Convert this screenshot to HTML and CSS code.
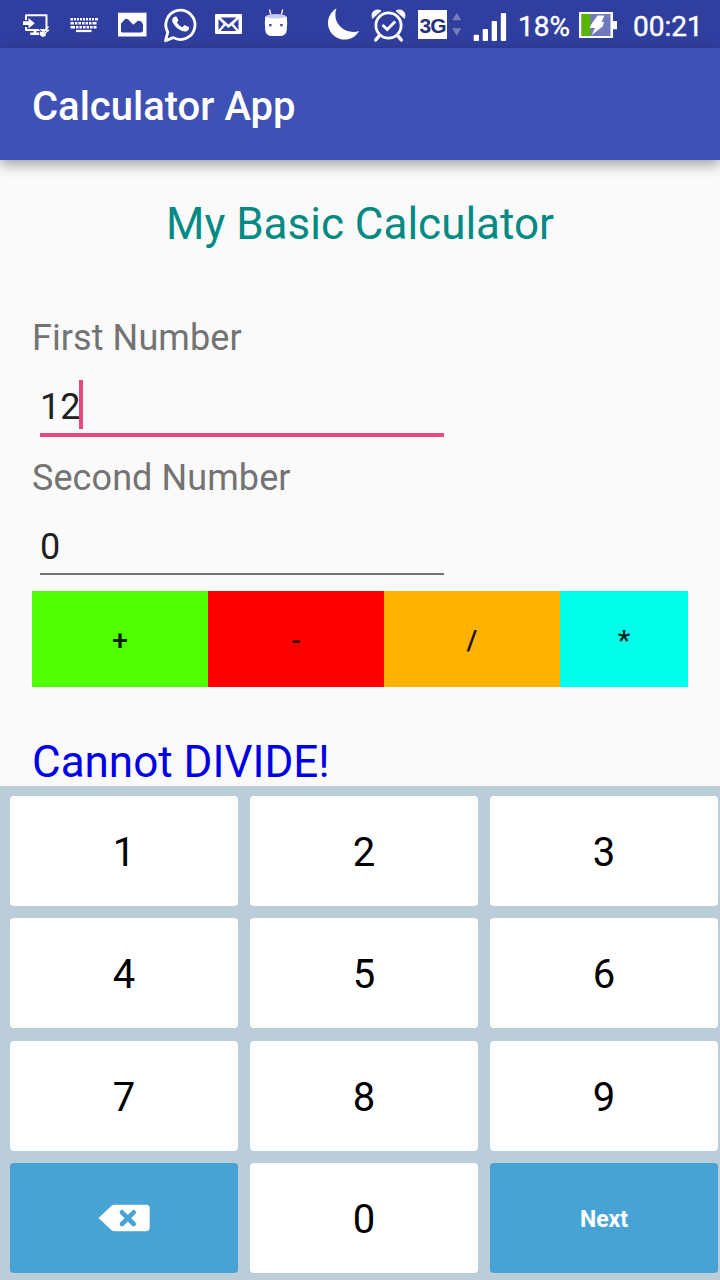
FILE: index.html
```html
<!DOCTYPE html>
<html lang="en">
<head>
<meta charset="utf-8">
<title>Calculator App</title>
<link rel="stylesheet" href="styles.css">
</head>
<body>
<div class="screen">
  <header class="status">
    <div class="group notifications">
      <svg class="icon" viewBox="12 0 48 48" width="48" height="48">
        <path d="M26 20V15.200h20.500V30H26v-3" fill="none" stroke="#fff" stroke-width="2" stroke-linejoin="round"/>
        <path d="M23 21.300h5.500V18l6.200 5.200-6.200 5.200v-3.300H23zM33.500 30h3v2.500h2.700V35h-9v-2.500h3.300z" fill="#fff"/>
        <path d="M48.500 26.500l-4.700 5.200M45 33l4-3" stroke="#fff" stroke-width="1.400"/>
        <path d="M40 31.500l3-.6 3 2.500-.5 2.700-3 1-2.700-2z" fill="#fff"/>
        <path d="M39 29l3 3" stroke="#303f9f" stroke-width="1"/>
      </svg>
      <svg class="icon" viewBox="60 0 48 48" width="48" height="48" fill="none" stroke="#fff">
        <path d="M70.500 19.200h2.500m1 0h2m1 0h2m1 0h2m1 0h2m1 0h2m1 0h2m1 0h2m1 0h3" stroke-width="2.500"/>
        <path d="M70.500 23.300h3.500m1 0h2.500m1 0h2.500m1 0h2.500m1 0h2.500m1 0h2.500m1 0h4" stroke-width="2.500"/>
        <path d="M70.500 27.300h4.500m1 0h2.500m1 0h2.500m1 0h2.500m1 0h2.500m1 0h2.500m1 0h3" stroke-width="2.500"/>
        <path d="M76 31h15.500" stroke-width="2.200"/>
      </svg>
      <svg class="icon" viewBox="108 0 48 48" width="48" height="48">
        <path d="M118 12.700h28.500v23.800H118z" fill="#fff"/>
        <path d="M121 32v-8.500l4.500-4.700 2.500.5 5.300 5.400 4.700-4 3 .5 2 3V31l-1.500 1.500h-19z" fill="#303f9f"/>
      </svg>
      <svg class="icon" viewBox="156 0 48 48" width="48" height="48">
        <path d="M165.500 40.700l2.300-8.500a14.600 14.600 0 1 1 5.500 5.400z" fill="none" stroke="#fff" stroke-width="2.800" stroke-linejoin="round"/>
        <path d="M174 17c1.500-1 2.500-.7 3.200.8l1 2.300c.3.800-.4 1.500-1.200 2.400 1.300 2.300 3.200 4 5.500 4.800l1.500-1.700c.5-.5 1-.4 1.700-.1l3 1.500c.8.500.2 2.300-.5 3.200-1.300 1.500-3.700 1.700-5.800.9-4.500-1.700-7.300-4.400-9.600-8.300-1.300-2.400-.6-4.500 1.200-5.800z" fill="#fff"/>
      </svg>
      <svg class="icon" viewBox="204 0 48 48" width="48" height="48">
        <rect x="215" y="14" width="27" height="20" rx="1.300" fill="#fff"/>
        <path d="M220.500 17.500h16l-8 7zM218.500 19v11l5-6zM238.500 19v11l-5-6zM220.500 31l5-5.500 3 2.500 3-2.500 5 5.500z" fill="#303f9f"/>
      </svg>
      <svg class="icon" viewBox="252 0 48 48" width="48" height="48">
        <path d="M269.500 9.500l1.300 5M282.700 9.500l-1.300 5" stroke="#fff" stroke-width="1.300"/>
        <path d="M265.200 16.500h21.600q.7 6 0 13.500-.7 6-7 6h-7.600q-6.300 0-7-6-.7-7.500 0-13.500z" fill="#fff"/>
        <ellipse cx="276" cy="16.200" rx="10" ry="2.200" fill="#c5cbe9"/>
        <path d="M269.200 24h2.300v2.300h-2.300zM280.300 24h2.300v2.300h-2.300z" fill="#303f9f"/>
      </svg>
    </div>
    <div class="group system">
      <svg class="icon" viewBox="320 0 44 48" width="44" height="48">
        <path d="M336.500 8.300a16.700 16.700 0 1 0 22.700 22.800C346 35.500 331 24 336.500 8.300z" fill="#fff"/>
      </svg>
      <svg class="icon" viewBox="364 0 50 48" width="50" height="48" fill="none" stroke="#fff">
        <circle cx="388.500" cy="25.500" r="12.600" stroke-width="2.800"/>
        <path d="M382.500 25l4.700 4.500 8-8" stroke-width="3"/>
        <path d="M379 36l-3.300 4M398 36l3.300 4" stroke-width="3.500" stroke-linecap="round"/>
        <path d="M372.700 18.300C370.300 12.500 375 8.300 381 10.700zM404.300 18.300c2.400-5.800-2.300-10-8.300-7.600z" fill="#fff" stroke-width="1" stroke-linejoin="round"/>
      </svg>
      <span class="network">3G</span>
      <svg class="icon" viewBox="447 0 23 48" width="23" height="48">
        <path d="M456.700 12l5.300 8.800h-10.600zM456.700 36.500l5.300-8.800h-10.600z" fill="#747dbd" stroke="#253381" stroke-width=".7"/>
      </svg>
      <svg class="icon" viewBox="470 0 48 48" width="48" height="48">
        <g fill="#fff">
          <rect x="473.700" y="34.700" width="5.300" height="6.300" rx="1"/>
          <rect x="482.700" y="29" width="5.300" height="12" rx="1"/>
          <rect x="491.700" y="21" width="5.300" height="20" rx="1"/>
          <rect x="500.800" y="13" width="5.300" height="28" rx="1"/>
        </g>
      </svg>
      <span class="percent">18%</span>
      <svg class="icon" viewBox="576 0 58 48" width="58" height="48">
        <path d="M579 12h34v9h4v8.300h-4V38h-34z" fill="#fff"/>
        <path d="M581.500 14h29v22h-29z" fill="#7079bb"/>
        <path d="M581.500 14h8.800v22h-8.800z" fill="#59b500"/>
        <path d="M597.500 15.500h7l-3 6.500h2.700l-1.500 4.500-11 8.500 3.300-7h-5.300l1.500-3.500z" fill="#fff"/>
      </svg>
      <span class="clock">00:21</span>
    </div>
  </header>
  <div class="appbar">Calculator App</div>
  <main class="content">
    <h1 class="heading">My Basic Calculator</h1>
    <div class="label">First Number</div>
    <div class="field field-active">12<span class="caret"></span></div>
    <div class="label label-second">Second Number</div>
    <div class="field field-second">0</div>
    <div class="operators">
      <div class="op plus">+</div>
      <div class="op minus">-</div>
      <div class="op divide">/</div>
      <div class="op times">*</div>
    </div>
    <div class="result">Cannot DIVIDE!</div>
  </main>
  <section class="keyboard">
    <div class="key">1</div><div class="key">2</div><div class="key">3</div>
    <div class="key">4</div><div class="key">5</div><div class="key">6</div>
    <div class="key">7</div><div class="key">8</div><div class="key">9</div>
    <div class="key action">
      <svg class="icon" width="52" height="28" viewBox="98 1203.500 52 28">
        <path d="M98.500 1217.500l13-12.200q1.200-1 3-1H146q3.700 0 3.700 3.700v19q0 3.700-3.700 3.700h-31.500q-1.800 0-3-1z" fill="#fff"/>
        <path d="M122 1211.800l11.700 11.700m0-11.700L122 1223.500" stroke="#46a3d4" stroke-width="4.600" stroke-linecap="round"/>
      </svg>
    </div>
    <div class="key">0</div>
    <div class="key action next">Next</div>
  </section>
</div>
</body>
</html>
```
FILE: styles.css
```css
* { box-sizing: border-box; }
body { margin: 0; font-family: Roboto, "Liberation Sans", sans-serif; }
.screen {
  width: 720px;
  height: 1280px;
  overflow: hidden;
  display: flex;
  flex-direction: column;
  background: #fafafa;
}
.status {
  height: 48px;
  flex: none;
  display: flex;
  justify-content: space-between;
  padding: 0 0 0 12px;
  background: #303f9f;
  color: #fff;
}
.group { display: flex; align-items: center; }
.system { width: 400px; }
.icon { display: block; flex: none; }
.network {
  width: 29px;
  height: 29px;
  flex: none;
  margin-left: 4px;
  margin-top: 1px;
  background: #fff;
  color: #26317b;
  font: bold 21px/31px "Liberation Sans", sans-serif;
  letter-spacing: -1px;
  text-align: center;
}
.percent, .clock {
  flex: none;
  font-size: 28px;
  line-height: 48px;
  padding-top: 5px;
  -webkit-text-stroke: .4px #fff;
}
.percent { width: 58px; }
.clock { margin-left: -1px; }
.appbar {
  height: 112px;
  flex: none;
  padding: 4px 32px 0;
  background: #3f51b5;
  color: #fff;
  font-size: 40px;
  font-weight: 500;
  line-height: 110px;
  box-shadow: 0 5px 12px rgba(0, 0, 0, .35);
}
.content { height: 626px; flex: none; padding: 38px 32px 0; }
.heading {
  margin: 0;
  color: #008a83;
  font-size: 44px;
  font-weight: 400;
  line-height: 52px;
  text-align: center;
}
.label { margin-top: 66px; color: #737373; font-size: 36px; line-height: 44px; letter-spacing: .08px; }
.label-second { margin-top: 19px; }
.field {
  display: flex;
  align-items: center;
  width: 404px;
  height: 56px;
  margin: 20px 0 0 8px;
  padding-top: 1px;
  border-bottom: 2px solid #737373;
  color: #202020;
  font-size: 36px;
}
.field-active { height: 57px; padding-top: 0; border-bottom: 4px solid #eb477f; }
.field-second { margin-top: 19px; }
.caret { width: 4px; height: 49px; margin-left: -1px; margin-bottom: 4px; background: #eb477f; }
.operators {
  display: grid;
  grid-template-columns: 176px 176px 176px 128px;
  grid-template-rows: 96px;
  margin-top: 16px;
}
.op {
  height: 96px;
  font-size: 28px;
  font-weight: 500;
  line-height: 100px;
  text-align: center;
}
.plus { background: #50ff00; color: #0a2000; }
.minus { background: #f00; color: #300000; }
.divide { background: #ffb300; color: #201600; }
.times { background: #00ffe8; color: #00201d; }
.result { margin-top: 49px; color: #0000e8; font-size: 44px; line-height: 52px; }
.keyboard {
  flex: 1;
  display: grid;
  grid-template-columns: repeat(3, 228px);
  grid-template-rows: repeat(4, 110px);
  gap: 12.33px 12px;
  padding: 10px 2px 7px 10px;
  background: #bbcdd9;
}
.key {
  display: flex;
  align-items: center;
  justify-content: center;
  padding-top: 3px;
  border-radius: 4px;
  background: #fff;
  color: #000;
  font-size: 40px;
}
.action { background: #46a3d4; padding-top: 0; }
.next { padding-top: 4px; color: #fff; font-size: 23px; font-weight: 700; }
```
